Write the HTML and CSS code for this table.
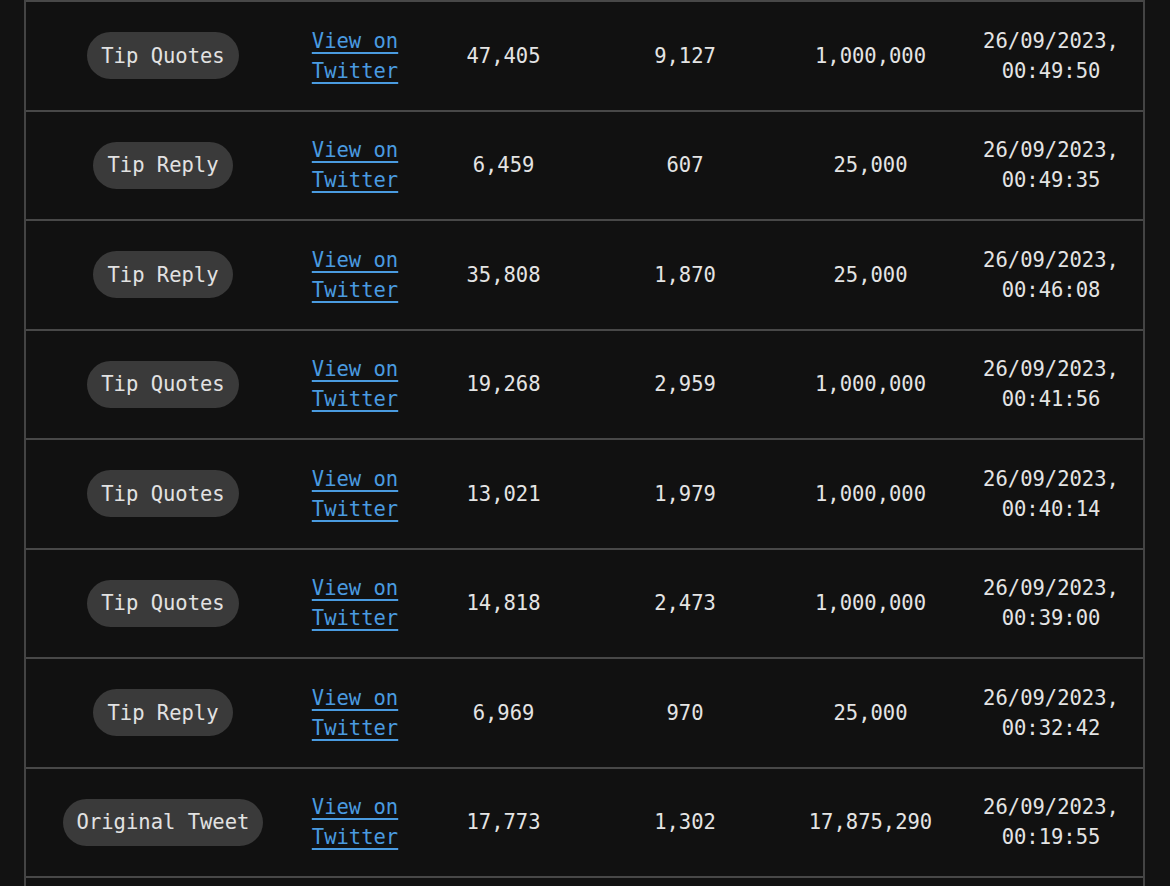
FILE: index.html
```html
<!DOCTYPE html>
<html lang="en">
<head>
<meta charset="utf-8">
<title>Tips</title>
<link rel="stylesheet" href="styles.css">
</head>
<body>
<div class="frame">
  <table class="tips">
    <colgroup>
      <col class="c-type"><col class="c-link"><col class="c-num1"><col class="c-num2"><col class="c-num3"><col class="c-date">
    </colgroup>
    <tbody>
      <tr>
        <td class="type"><span class="pill">Tip Quotes</span></td>
        <td class="link"><a href="#">View on<br>Twitter</a></td>
        <td class="num">47,405</td><td class="num">9,127</td><td class="num">1,000,000</td>
        <td class="date">26/09/2023,<br>00:49:50</td>
      </tr>
      <tr>
        <td class="type"><span class="pill">Tip Reply</span></td>
        <td class="link"><a href="#">View on<br>Twitter</a></td>
        <td class="num">6,459</td><td class="num">607</td><td class="num">25,000</td>
        <td class="date">26/09/2023,<br>00:49:35</td>
      </tr>
      <tr>
        <td class="type"><span class="pill">Tip Reply</span></td>
        <td class="link"><a href="#">View on<br>Twitter</a></td>
        <td class="num">35,808</td><td class="num">1,870</td><td class="num">25,000</td>
        <td class="date">26/09/2023,<br>00:46:08</td>
      </tr>
      <tr>
        <td class="type"><span class="pill">Tip Quotes</span></td>
        <td class="link"><a href="#">View on<br>Twitter</a></td>
        <td class="num">19,268</td><td class="num">2,959</td><td class="num">1,000,000</td>
        <td class="date">26/09/2023,<br>00:41:56</td>
      </tr>
      <tr>
        <td class="type"><span class="pill">Tip Quotes</span></td>
        <td class="link"><a href="#">View on<br>Twitter</a></td>
        <td class="num">13,021</td><td class="num">1,979</td><td class="num">1,000,000</td>
        <td class="date">26/09/2023,<br>00:40:14</td>
      </tr>
      <tr>
        <td class="type"><span class="pill">Tip Quotes</span></td>
        <td class="link"><a href="#">View on<br>Twitter</a></td>
        <td class="num">14,818</td><td class="num">2,473</td><td class="num">1,000,000</td>
        <td class="date">26/09/2023,<br>00:39:00</td>
      </tr>
      <tr>
        <td class="type"><span class="pill">Tip Reply</span></td>
        <td class="link"><a href="#">View on<br>Twitter</a></td>
        <td class="num">6,969</td><td class="num">970</td><td class="num">25,000</td>
        <td class="date">26/09/2023,<br>00:32:42</td>
      </tr>
      <tr>
        <td class="type"><span class="pill">Original Tweet</span></td>
        <td class="link"><a href="#">View on<br>Twitter</a></td>
        <td class="num">17,773</td><td class="num">1,302</td><td class="num">17,875,290</td>
        <td class="date">26/09/2023,<br>00:19:55</td>
      </tr>
    </tbody>
  </table>
</div>
</body>
</html>
```
FILE: styles.css
```css
html, body {
  margin: 0;
  padding: 0;
  background: #121212;
}
body {
  font-family: "DejaVu Sans Mono", "Liberation Mono", monospace;
  font-size: 20.5px;
  line-height: 30px;
  color: #e4e4e4;
  overflow: hidden;
}
.frame {
  margin-left: 24px;
  width: 1117px;
  border-left: 2px solid #444;
  border-right: 2px solid #444;
  padding-bottom: 40px;
  background: #111;
}
.tips {
  width: 1117px;
  border-collapse: separate;
  border-spacing: 0;
  table-layout: fixed;
  border-bottom: 2px solid #484848;
}
.c-type { width: 274px; }
.c-link { width: 110px; }
.c-num1 { width: 187px; }
.c-num2 { width: 176px; }
.c-num3 { width: 195px; }
.c-date { width: 175px; }
.tips td {
  border-top: 2px solid #484848;
  height: 107.5px;
  padding: 0;
  text-align: center;
  vertical-align: middle;
  white-space: nowrap;
}
.tips td.date {
  padding-right: 9px;
}
.pill {
  display: inline-block;
  background: #3a3a3a;
  color: #e2e2e2;
  padding: 8.5px 14px;
  border-radius: 24px;
}
.link a {
  color: #4a9be0;
  text-decoration: underline;
  text-underline-offset: 4px;
  text-decoration-thickness: 2px;
}
```
